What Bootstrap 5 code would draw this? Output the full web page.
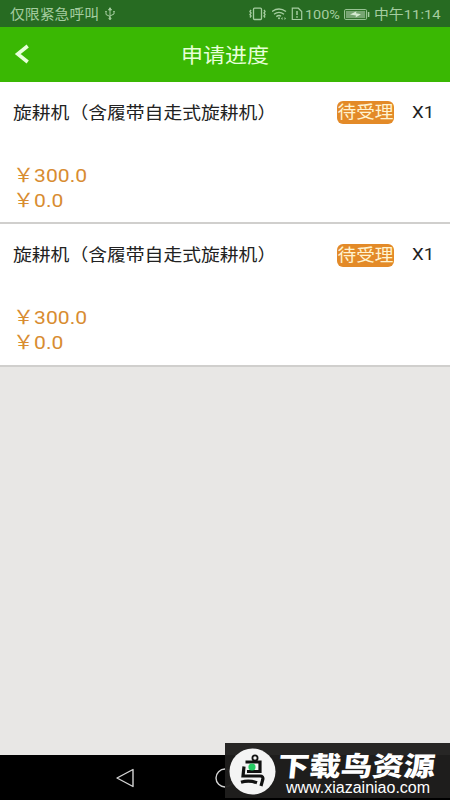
<!DOCTYPE html>
<html lang="zh-CN">
<head>
<meta charset="utf-8">
<meta name="viewport" content="width=device-width, initial-scale=1">
<title>申请进度</title>
<link href="https://cdn.jsdelivr.net/npm/bootstrap@5.3.0/dist/css/bootstrap.min.css" rel="stylesheet">
<style>
body{background:#e8e7e5;font-family:Roboto,"Noto Sans CJK SC",sans-serif;color:#222;overflow:hidden}
.screen{width:450px;height:800px}
.wide{display:inline-block;white-space:nowrap;transform:scaleX(1.1);transform-origin:left center;line-height:1}
.statusbar{height:27px;background:#276b22;color:#a5cda0;font-size:13.5px;padding:1px 0 0 10px}
.statusbar .carrier{width:94px}
.statusbar .percent{width:39px;margin-left:1px}
.statusbar .percent .wide{transform:scaleX(1.07)}
.statusbar .clock{width:76px;margin-left:4px}
.appbar{height:55px;background:#3ab803;color:#e6ffd9}
.appbar .back{width:17px;height:22px;margin-left:14px;margin-top:-1px}
.appbar h1{font-size:20px;font-weight:400;transform-origin:center;margin:0 auto;padding-top:3px}
.appbar .spare{width:31px}
.order{height:142.3px;background:#fff;border-bottom:2px solid #d0cfcd;padding:18px 0 0 13px}
.order .name{width:324px;font-size:17px;padding-top:1px}
.order .name .wide{transform:scaleX(1.106)}
.order .state{width:57px;height:23px;border-radius:6px;background:#e38a28;color:#fff3d0;font-size:17px;margin-top:-1px}
.order .state .wide{transform-origin:center}
.order .count{width:38px;margin-left:18px;font-size:17px;margin-top:-1px}
.order .money{color:#d88c31;font-size:19px;margin-top:35px}
.order .money .wide{transform:scaleX(1.11)}
.order .money div{height:25px}
.navbar-soft{height:45px;background:#000;padding:0 115px}
.brandmark{right:0;bottom:2px;width:225px;height:55px;background:rgba(31,30,29,.96);color:#fff}
.brandmark .logo{width:47px;height:47px;margin-left:4px;margin-top:2px}
.brandmark .words{margin-left:2px;padding-top:7px}
.brandmark .zh{font-size:27px;font-weight:900;line-height:28px;height:27px;white-space:nowrap;transform:scaleX(1.165) skewX(-5deg);transform-origin:left center}
.brandmark .url{font-family:"Liberation Sans",sans-serif;font-size:16px;line-height:16px;padding-left:8px;white-space:nowrap}
</style>
<script src="https://cdn.jsdelivr.net/npm/bootstrap@5.3.0/dist/js/bootstrap.bundle.min.js"></script>
</head>
<body>
<div class="screen d-flex flex-column position-relative overflow-hidden">
  <div class="statusbar d-flex align-items-center">
    <div class="carrier"><span class="wide">仅限紧急呼叫</span></div>
    <svg width="12" height="14" viewBox="0 0 12 14" fill="none" stroke="currentColor" stroke-width="1"><path d="M6 2v9M2 5v2.5L6 9.5M10 5v2L6 9"/><path d="M4.5 3L6 .7 7.500 3z" fill="currentColor"/><circle cx="6" cy="11.500" r="1" fill="currentColor"/><path d="M1.200 4.500h1.600M9.200 4.500h1.600"/></svg>
    <div class="d-flex align-items-center ms-auto">
      <svg width="19" height="14" viewBox="0 0 19 14" fill="none" stroke="currentColor"><rect x="4.500" y="1.200" width="8" height="11.300" rx="1" stroke-width="1.300"/><path d="M2 3l-1 1.500L2 6 1 7.500 2 9l-1 1.500M15 3l1 1.500L15 6l1 1.500L15 9l1 1.500" stroke-width="1.400"/></svg>
      <svg class="ms-1" width="17" height="14" viewBox="0 0 17 14" fill="none" stroke="currentColor" stroke-width="1.400"><path d="M0 4.500q7-5 14 0M2 7.200q5-3.700 10 0M4.300 9.600Q7 7.700 9 9.300"/><circle cx="7" cy="11.300" r="1" fill="currentColor" stroke="none"/><path d="M9 11.500l1.500-1.500v3zM14 11.500L12.500 10v3z" fill="currentColor" stroke="none"/></svg>
      <svg class="ms-1" width="11" height="14" viewBox="1 0 11 14" overflow="visible" fill="none" stroke="currentColor" stroke-width="1.200"><path d="M.3 1.200h6L9.700 4.500v8H.3z"/><path d="M5 4v4M5 9.300v1.400" stroke-width="1.500"/></svg>
      <div class="percent"><span class="wide">100%</span></div>
      <svg width="26" height="13" viewBox="0 0 26 13"><rect x=".6" y="1.600" width="22" height="9.800" rx="1" fill="none" stroke="currentColor"/><rect x="2" y="3" width="19.200" height="7" fill="#77a573"/><path d="M6 6.500l6 1-.5 2L17 6.300l-5-1 .5-2z" fill="#d4ead0"/><path d="M24.600 4v5" stroke="currentColor" stroke-width="1.500"/></svg>
      <div class="clock"><span class="wide">中午11:14</span></div>
    </div>
  </div>

  <header class="appbar d-flex align-items-center">
    <svg class="back" viewBox="0 0 17 22" fill="none" stroke="currentColor" stroke-width="3.600"><path d="M13.700 3L3.700 11l10 8"/></svg>
    <h1 class="wide">申请进度</h1>
    <div class="spare"></div>
  </header>

  <main class="flex-grow-1">
    <article class="order">
      <div class="d-flex align-items-center">
        <div class="name"><span class="wide">旋耕机（含履带自走式旋耕机）</span></div>
        <div class="state d-flex align-items-center justify-content-center"><span class="wide">待受理</span></div>
        <div class="count"><span class="wide">X1</span></div>
      </div>
      <div class="money"><div><span class="wide">￥300.0</span></div><div><span class="wide">￥0.0</span></div></div>
    </article>
    <article class="order">
      <div class="d-flex align-items-center">
        <div class="name"><span class="wide">旋耕机（含履带自走式旋耕机）</span></div>
        <div class="state d-flex align-items-center justify-content-center"><span class="wide">待受理</span></div>
        <div class="count"><span class="wide">X1</span></div>
      </div>
      <div class="money"><div><span class="wide">￥300.0</span></div><div><span class="wide">￥0.0</span></div></div>
    </article>
  </main>

  <nav class="navbar-soft d-flex justify-content-between align-items-center">
    <svg width="20" height="20" viewBox="0 0 20 20" fill="none" stroke="#d4d4d4" stroke-width="1.400"><path d="M18 1.500v17L2 10z" stroke-linejoin="round"/></svg>
    <svg width="20" height="20" viewBox="0 0 20 20" fill="none" stroke="#d4d4d4" stroke-width="1.400"><circle cx="10" cy="10" r="9"/></svg>
    <svg width="20" height="20" viewBox="0 0 20 20" fill="none" stroke="#d4d4d4" stroke-width="1.400"><path d="M2 2h16v16H2z"/></svg>
  </nav>

  <aside class="brandmark position-absolute d-flex align-items-center">
    <svg class="logo flex-shrink-0" viewBox="0 0 47 47"><circle cx="23.500" cy="23.500" r="23" fill="#f4f4f4"/><g fill="none" stroke="#111" stroke-width="3.200"><circle cx="26" cy="10" r="2.600" stroke-width="1.800"/><path d="M16.500 14H31v9.500H18M15 18.500l-1 9.500h17q3.500 0 2.800 3.500L32 38M12 34.300q8-2.500 16 .5"/></g><circle cx="23" cy="19" r="3.600" fill="#24cb62"/></svg>
    <div class="words">
      <div class="zh">下载鸟资源</div>
      <div class="url">www.xiazainiao.com</div>
    </div>
  </aside>
</div>
</body>
</html>
